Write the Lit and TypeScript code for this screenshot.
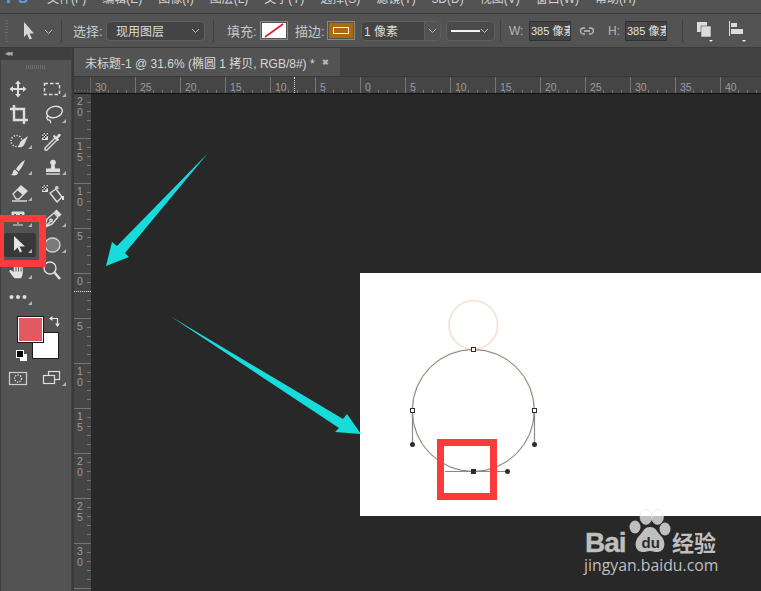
import { LitElement, html, css, svg } from "lit";
import { customElement } from "lit/decorators.js";

const ic = (body: unknown) => html`<svg class="ico" viewBox="0 0 24 24" width="24" height="24" fill="none" stroke="#dedede" stroke-width="1.4">${body}</svg>`;
const checker = svg`<g stroke="none"><rect x="2" y="4" width="6" height="7" fill="#ddd"/><path d="M2 4h1.500v1.500H2zM5 4h1.500v1.500H5zM3.500 5.500H5V7H3.500zM6.500 5.500H8V7H6.500zM2 7h1.500v1.500H2zM5 7h1.500v1.500H5zM3.500 8.500H5V10H3.500z" fill="#222"/></g>`;

const TOOLS: [unknown, boolean, string?][] = [
  [ic(svg`<path d="M12 6v12M6 12h12" stroke-width="2"/><path d="M12 3.500l3 3.500H9zM12 20.500L9 17h6zM3.500 12L7 9v6zM20.500 12L17 15V9z" fill="#dedede" stroke="none"/>`), false],
  [ic(svg`<rect x="4.500" y="6.500" width="15" height="11" stroke-dasharray="3.500 2"/>`), true],
  [ic(svg`<path d="M8 2v15h14M4 6h14v15" stroke-width="2.400"/>`), false],
  [ic(svg`<ellipse cx="14.500" cy="9" rx="8" ry="5.500" transform="rotate(-15 14.500 9)"/><path d="M8 12c-2 3-1 5 1 5s1 2 2 3"/>`), true],
  [ic(svg`<circle cx="10.500" cy="12" r="5.500" stroke-dasharray="1.300 1.500"/><path d="M22 7l-7 5c-2 2-1 4-3 6 4 1 6-1 7-4z" fill="#dedede" stroke="none"/>`), true],
  [ic(svg`${checker}<path d="M15 9L5 19v2h2l10-10z" stroke-linejoin="round"/><path d="M13.500 6.500l5 5" stroke-width="2"/><path d="M15.500 8.500l3-3.500c1-1 3 1 2 2l-3 3z" fill="#dedede" stroke="none"/>`), false],
  [ic(svg`<path d="M19 5c-4 2-7 6-9 9l2.500 2.500c3-3 5-7 6.500-11.500zM9 14.500c-3 1-1 4-4 5.500 4 1 7 0 7-2.500z" fill="#dedede" stroke="none"/>`), true],
  [ic(svg`<circle cx="13" cy="7.500" r="2.800" fill="#dedede" stroke="none"/><path d="M11.500 9.500h3l.8 4h-4.600zM6 13.500h14V17H6z" fill="#dedede" stroke="none"/><path d="M6 19h14"/>`), true],
  [ic(svg`<path d="M7 13l8-8 6 5-8 8H10z" stroke-linejoin="round"/><path d="M11 9l4-4 6 5-4 4z" fill="#dedede" stroke="none"/><path d="M6 20h15"/>`), true],
  [ic(svg`${checker}<path d="M10 12l6-4 6 8-5 5z" stroke-linejoin="round"/><path d="M16 8c-1-3 2-3 2 0" /><path d="M23 15v4" stroke-width="2"/>`), false],
  [ic(svg`<path d="M6 5h12v3h-1.500V6.500h-3V14h-3V6.500h-3V8H6zM12 14v3M7 18h10" fill="#dedede" stroke-width="1"/>`), true],
  [ic(svg`<path d="M5 20l2-8 7-6 4 4-6 7zM5 20l5-5" stroke-linejoin="round"/><circle cx="11" cy="13.500" r="1.200"/><path d="M15 5l1.500-1.500 4 4L19 9z" fill="#dedede"/>`), true],
  [ic(svg`<path d="M8 3v15l3.500-3.500 2.500 5 2-1-2.500-5H19z" fill="#e6e6e6" stroke="none"/>`), true, "on"],
  [ic(svg`<ellipse cx="12.500" cy="12" rx="7.500" ry="7" fill="#7b7b7b" stroke="#d0d0d0"/>`), true],
  [ic(svg`<path transform="translate(2 2) scale(.82)" d="M8 21c-2-2-5-6-6-8-1-2 1-3 3-1l2 2V6c0-2 2-2 2 0V4c0-2 3-2 3 0v1c0-2 3-2 3 0v2c0-2 3-2 3 0v7c0 3-1 5-2 7z" fill="#e4e4e4" stroke="none"/><path d="M10 7.500v5M12.500 7v5.500M15 7.500v5" stroke="#555" stroke-width="1"/>`), true],
  [ic(svg`<circle cx="10" cy="9" r="6"/><path d="M14.500 13.500L20 20" stroke-width="2.600"/>`), false],
  [ic(svg`<g fill="#dedede" stroke="none"><circle cx="5.500" cy="12" r="2"/><circle cx="12" cy="12" r="2"/><circle cx="18.500" cy="12" r="2"/></g>`), true],
];

const MENUS = ["文件(F)", "编辑(E)", "图像(I)", "图层(L)", "文字(Y)", "选择(S)", "滤镜(T)", "3D(D)", "视图(V)", "窗口(W)", "帮助(H)"];

const chevron = html`<svg class="chev" width="9" height="6" viewBox="0 0 9 6"><path d="M1 1l3.500 3.500L8 1" fill="none" stroke="#bdbdbd" stroke-width="1"/></svg>`;

function hRuler() {
  const out: unknown[] = [];
  for (let k = -6; k <= 8; k++) {
    const x = 360 + 45 * k - 74;
    out.push(svg`<path d="M${x + 0.5} 0V17" stroke="#757575"/>`);
    out.push(svg`<text x="${x + 5}" y="14" class="rt">${Math.abs(k) * 5}</text>`);
    for (let j = 1; j < 5; j++) out.push(svg`<path d="M${x + 9 * j + 0.5} 13V16" stroke="#757575"/>`);
  }
  return out;
}

function vRuler() {
  const out: unknown[] = [];
  for (let k = -4; k <= 7; k++) {
    const y = 273 + 45 * k - 94;
    out.push(svg`<path d="M0 ${y + 0.5}H17" stroke="#757575"/>`);
    String(Math.abs(k) * 5).split("").forEach((d, i) => {
      out.push(svg`<text x="3" y="${y + 12 + i * 11}" class="rt">${d}</text>`);
    });
    for (let j = 1; j < 5; j++) out.push(svg`<path d="M13 ${y + 9 * j + 0.5}H17" stroke="#757575"/>`);
  }
  return out;
}

@customElement("app-root")
export class AppRoot extends LitElement {
  static styles = css`
    :host { display: block; width: 761px; height: 591px; overflow: hidden; font-family: "Liberation Sans", "Noto Sans CJK SC", sans-serif; color: #d8d8d8; }
    .app { position: relative; width: 761px; height: 591px; display: flex; flex-direction: column; background: #3a3a3a; overflow: hidden; }
    .menu { height: 13px; flex: none; background: #535353; display: flex; overflow: hidden; font-size: 12px; line-height: 14px; color: #d4d4d4; border-bottom: 1px solid #3b3b3b; }
    .ps { width: 47px; flex: none; margin-top: -12px; padding-left: 6px; box-sizing: border-box; color: #5e9fd6; font-weight: bold; font-size: 18px; line-height: 18px; }
    .items { display: flex; gap: 16px; margin-top: -8px; }
    .items span { white-space: nowrap; }
    .opts { height: 33px; flex: none; background: #535353; border-bottom: 1px solid #3b3b3b; display: flex; align-items: center; font-size: 12px; color: #c8c8c8; }
    .grip { width: 3px; height: 22px; margin-left: 5px; background: repeating-linear-gradient(#6a6a6a 0 1px, transparent 1px 3px); }
    .arrow { margin-left: 15px; }
    .chev { flex: none; }
    .ml-opt { margin-left: 9px; }
    .div { width: 1px; height: 22px; background: #3f3f3f; flex: none; }
    .d1 { margin-left: 8px; }
    .lbl { font-size: 13px; white-space: nowrap; color: #c8c8c8; }
    .l1 { margin-left: 11px; width: 33px; }
    .sel { height: 20px; box-sizing: border-box; background: #444; border: 1px solid #5f5f5f; border-radius: 4px; display: flex; align-items: center; font-size: 12px; color: #dcdcdc; flex: none; }
    .s1 { width: 99px; padding: 0 4px 0 9px; justify-content: space-between; }
    .d2 { margin-left: 8px; }
    .l2 { margin-left: 13px; width: 33px; }
    .sw { width: 28px; height: 19px; box-sizing: border-box; border: 1px solid #8a8a8a; padding: 1px; flex: none; }
    .sw svg { display: block; }
    .l3 { margin-left: 7px; width: 32px; }
    .s2 { margin-left: 6px; width: 80px; padding-left: 2px; overflow: hidden; }
    .s2 b { font-weight: normal; flex: 1; }
    .s2 i { width: 15px; height: 18px; border-left: 1px solid #5f5f5f; display: flex; align-items: center; justify-content: center; background: #535353; }
    .s3 { margin-left: 5px; width: 49px; padding: 0 5px 0 4px; justify-content: space-between; background: #4a4a4a; }
    .s3 u { width: 29px; height: 2px; background: #f2f2f2; }
    .d3 { margin-left: 5px; }
    .wl { font-size: 12px; color: #b8b8b8; flex: none; }
    .w1 { margin-left: 8px; width: 20px; }
    .inp { width: 42px; height: 20px; box-sizing: border-box; background: #434343; border: 1px solid #333; overflow: hidden; white-space: nowrap; padding-left: 1px; line-height: 18px; font-size: 11px; color: #e2e2e2; flex: none; }
    .link { margin-left: 9px; flex: none; }
    .w2 { margin-left: 14px; width: 17px; }
    .d4 { margin-left: 15px; }
    .ob1 { margin-left: 13px; flex: none; }
    .ob2 { margin-left: 15px; flex: none; }
    .body { flex: 1; display: flex; min-height: 0; }
    .panel { width: 72px; flex: none; background: #535353; border-left: 1px solid #3f3f3f; box-sizing: border-box; border-right: 1px solid #424242; display: flex; flex-direction: column; }
    .phead { height: 12px; background: #3f3f3f; font-size: 9px; line-height: 11px; color: #aaa; padding-left: 4px; letter-spacing: -2px; flex: none; }
    .pgrip { width: 20px; height: 4px; margin: 5px auto 0; background: repeating-linear-gradient(90deg, #6c6c6c 0 1px, transparent 1px 2px); flex: none; }
    .tools { display: grid; grid-template-columns: 34px 34px; grid-auto-rows: 26px; margin-top: 7px; }
    .tool { position: relative; display: flex; align-items: center; justify-content: center; }
    .tool.on::before { content: ""; position: absolute; left: 3px; top: 1px; right: -1px; bottom: 1px; background: #383838; border-radius: 3px; }
    .ico { position: relative; display: block; width: 24px; height: 24px; }
    .corner { position: absolute; right: 3px; bottom: 5px; width: 0; height: 0; border-left: 4px solid transparent; border-bottom: 4px solid #b4b4b4; }
    .colors { position: relative; height: 52px; margin-top: 3px; flex: none; }
    .fg, .bg { position: absolute; box-sizing: border-box; width: 25px; height: 25px; }
    .fg { left: 17px; top: 4px; background: #e05a5f; border: 1px solid #fff; outline: 1px solid #1c1c1c; z-index: 1; }
    .bg { left: 32px; top: 20px; background: #fff; outline: 1px solid #1c1c1c; }
    .mini { position: absolute; left: 15px; top: 37px; }
    .swap { position: absolute; left: 48px; top: 3px; }
    .bottom { display: grid; grid-template-columns: 34px 34px; height: 26px; }
    .bottom .tool { height: 26px; }
    .main { flex: 1; display: flex; flex-direction: column; min-width: 0; margin-left: 2px; }
    .tabs { height: 28px; flex: none; background: #424242; display: flex; }
    .tab { width: 266px; background: #535353; display: flex; align-items: center; justify-content: space-between; padding: 0 11px; box-sizing: border-box; font-size: 12px; color: #d8d8d8; white-space: nowrap; }
    .x { color: #b5b5b5; font-size: 8px; font-weight: bold; }
    .rulerrow { height: 16px; flex: none; background: #454545; border-top: 1px solid #383838; border-bottom: 1px solid #111; display: flex; }
    .corner-r { width: 17px; flex: none; position: relative; border-right: 1px solid #666; box-sizing: border-box; background: radial-gradient(circle, #777 .5px, transparent .8px) 0 12px / 3px 3px repeat-x; }
    .hr { display: block; flex: 1; }
    .work { flex: 1; display: flex; min-height: 0; background: #282828; }
    .vr { width: 17px; flex: none; background: #454545; display: block; }
    .rt { font: 10.500px "Liberation Sans", sans-serif; fill: #9c9c9c; }
    .canvas { flex: 1; position: relative; }
    .page { position: absolute; left: 269px; top: 179px; width: 401px; height: 243px; background: #fff; }
    .page svg { display: block; }
    .lg { fill: #bfbfbf; }
    .over { position: absolute; left: 0; top: 0; pointer-events: none; }
    .hmark { position: absolute; left: 203px; top: 0; width: 0; height: 16px; border-left: 1px dotted #ddd; }
    .vmark { position: absolute; left: 0; top: 197px; width: 17px; height: 0; border-top: 1px dotted #ddd; }
    .relr { position: relative; flex: 1; display: flex; min-width: 0; }
    .relv { position: relative; width: 17px; flex: none; }
    .lt { font: bold 28px "Liberation Sans", sans-serif; letter-spacing: -1px; fill: #bfbfbf; stroke: #bfbfbf; stroke-width: .4px; }
    .cn { font: bold 22px "Noto Sans CJK SC", sans-serif; fill: #bfbfbf; }
    .url { font: 15.800px "Open Sans", sans-serif; fill: #bfbfbf; }
    .du { font: bold 15px "Liberation Sans", sans-serif; fill: #2a2a2a; }
  `;

  render() {
    return html`<div class="app">
      <div class="menu">
        <div class="ps">Ps</div>
        <div class="items">${MENUS.map((m) => html`<span>${m}</span>`)}</div>
      </div>
      <div class="opts">
        <div class="grip"></div>
        <svg class="arrow" width="12" height="18" viewBox="0 0 12 18"><path d="M1 0v15l3-3 2.500 5.500 2.500-1-2.500-5H11z" fill="#d6d6d6"/></svg>
        <span class="ml-opt">${chevron}</span>
        <div class="div d1"></div>
        <span class="lbl l1">选择:</span>
        <div class="sel s1"><span>现用图层</span>${chevron}</div>
        <div class="div d2"></div>
        <span class="lbl l2">填充:</span>
        <div class="sw"><svg width="24" height="15" viewBox="0 0 24 15"><rect width="24" height="15" fill="#fff"/><path d="M3 14L21 1" stroke="#d8222a" stroke-width="1.600"/></svg></div>
        <span class="lbl l3">描边:</span>
        <div class="sw"><svg width="24" height="15" viewBox="0 0 24 15"><rect width="24" height="15" fill="#ad6a0c"/><rect x="4.500" y="4.500" width="15" height="6" fill="none" stroke="#f4f4f4"/></svg></div>
        <div class="sel s2"><b>1 像素</b><i>${chevron}</i></div>
        <div class="sel s3"><u></u>${chevron}</div>
        <div class="div d3"></div>
        <span class="wl w1">W:</span>
        <div class="inp">385 像素</div>
        <svg class="link" width="14" height="8" viewBox="0 0 14 8"><path d="M5 1H3.500a3 3 0 000 6H5M9 1h1.500a3 3 0 010 6H9M4 4h6" fill="none" stroke="#bdbdbd" stroke-width="1.300"/></svg>
        <span class="wl w2">H:</span>
        <div class="inp">385 像素</div>
        <div class="div d4"></div>
        <svg class="ob1" width="18" height="22" viewBox="0 0 18 22"><rect x="1" y="2" width="10" height="10" fill="#dcdcdc"/><rect x="5" y="6" width="10" height="11" fill="#dcdcdc" stroke="#535353" stroke-width=".6"/><path d="M13 20h4l-2 2z" fill="#eee"/></svg>
        <svg class="ob2" width="18" height="22" viewBox="0 0 18 22"><path d="M.5 1v15" stroke="#dcdcdc"/><rect x="2" y="3" width="6" height="4" fill="#dcdcdc"/><rect x="2" y="9" width="12" height="5" fill="#dcdcdc"/><path d="M13 20h4l-2 2z" fill="#eee"/></svg>
      </div>
      <div class="body">
        <div class="panel">
          <div class="phead">◂◂</div>
          <div class="pgrip"></div>
          <div class="tools">
            ${TOOLS.map(([i, c, on]) => html`<div class="tool ${on ?? ""}">${i}${c ? html`<span class="corner"></span>` : ""}</div>`)}
          </div>
          <div class="colors">
            <div class="fg"></div><div class="bg"></div>
            <svg class="mini" width="12" height="12" viewBox="0 0 12 12"><rect x="4" y="4" width="7" height="7" fill="#fff"/><rect x=".5" y=".5" width="7" height="7" fill="#000" stroke="#fff"/></svg>
            <svg class="swap" width="11" height="11" viewBox="0 0 11 11"><path d="M3 2.500h5.500V8" fill="none" stroke="#e6e6e6" stroke-width="1.200"/><path d="M3.500 0v5L0 2.500zM6 7.500h5L8.500 11z" fill="#e6e6e6"/></svg>
          </div>
          <div class="bottom">
            <div class="tool">${ic(svg`<rect x="3.500" y="6.500" width="17" height="12" stroke="#cfcfcf" stroke-width="1.200"/><circle cx="12" cy="12.500" r="3.500" stroke-dasharray="1.300 1.300"/>`)}</div>
            <div class="tool">${ic(svg`<rect x="8.500" y="5.500" width="11" height="8" fill="#535353" stroke-width="1.200"/><rect x="3.500" y="9.500" width="11" height="8" fill="#535353" stroke-width="1.200"/>`)}<span class="corner"></span></div>
          </div>
        </div>
        <div class="main">
          <div class="tabs"><div class="tab"><span>未标题-1 @ 31.6% (椭圆 1 拷贝, RGB/8#) *</span><span class="x">✖</span></div></div>
          <div class="rulerrow">
            <div class="corner-r"></div>
            <div class="relr">
              <svg class="hr" width="670" height="16" viewBox="17 0 670 16">${hRuler()}</svg>
              <div class="hmark"></div>
            </div>
          </div>
          <div class="work">
            <div class="relv">
              <svg class="vr" width="17" height="498" viewBox="0 0 17 498">${vRuler()}</svg>
              <div class="vmark"></div>
            </div>
            <div class="canvas">
              <div class="page">
                <svg width="401" height="243" viewBox="360 273 401 243">
                  <circle cx="473.300" cy="325" r="24.300" fill="none" stroke="#f3e5d6" stroke-width="1.800"/>
                  <circle cx="473.300" cy="410.500" r="61" fill="none" stroke="#f3e5d6" stroke-width="2"/>
                  <circle cx="473.300" cy="410.500" r="61" fill="none" stroke="#6a6a6a" stroke-width=".8"/>
                  <path d="M412.500 410V444M534.500 410V444M445 471.500H507" stroke="#8a8a8a" stroke-width="1.200"/>
                  <g fill="#2c2c2c"><circle cx="412.500" cy="444.500" r="2.500"/><circle cx="534.500" cy="444.500" r="2.500"/><circle cx="507.500" cy="471.500" r="2.500"/><rect x="471" y="469" width="5" height="5"/></g>
                  <g fill="#fff" stroke="#2c2c2c"><rect x="471.500" y="347.500" width="4" height="4"/><rect x="410.500" y="408.500" width="4" height="4"/><rect x="532.500" y="408.500" width="4" height="4"/></g>
                </svg>
              </div>
            </div>
          </div>
        </div>
      </div>
      <svg class="over" width="761" height="591" viewBox="0 0 761 591">
        <path d="M208 153L125 253 129 257 106 266 112 242 117 246z" fill="#18dcdc"/>
        <path d="M170 316L343 419 347 414 361 434 335 432 339 428z" fill="#18dcdc"/>
        <rect x="440.500" y="442.500" width="53" height="54" fill="none" stroke="#fb3b3b" stroke-width="7"/>
        <rect x="0.500" y="218.500" width="42" height="45" fill="none" stroke="#fb3b3b" stroke-width="7"/>
        <g>
          <ellipse cx="646" cy="517" rx="6" ry="7.500" fill="#fff" fill-opacity=".7" stroke="#ddd" stroke-opacity=".5"/>
          <ellipse cx="657.500" cy="517" rx="6" ry="7.500" fill="#fff" fill-opacity=".7" stroke="#ddd" stroke-opacity=".5"/>
          <ellipse cx="635" cy="527" rx="5.500" ry="6.500" class="lg"/>
          <ellipse cx="665" cy="529" rx="5.500" ry="6.500" class="lg"/>
          <path d="M650 527c6 0 7 5 11 9 5 5 5 15-3 16-3 .5-5-1-8-1s-5 1.500-8 1c-8-1-8-11-3-16 4-4 5-9 11-9z" class="lg"/>
          <text x="641.500" y="548" class="du">du</text>
          <text x="585" y="552" class="lt">Bai</text>
          <text x="672" y="551" class="cn">经验</text>
          <text x="584" y="571" class="url">jingyan.baidu.com</text>
        </g>
      </svg>
    </div>`;
  }
}
